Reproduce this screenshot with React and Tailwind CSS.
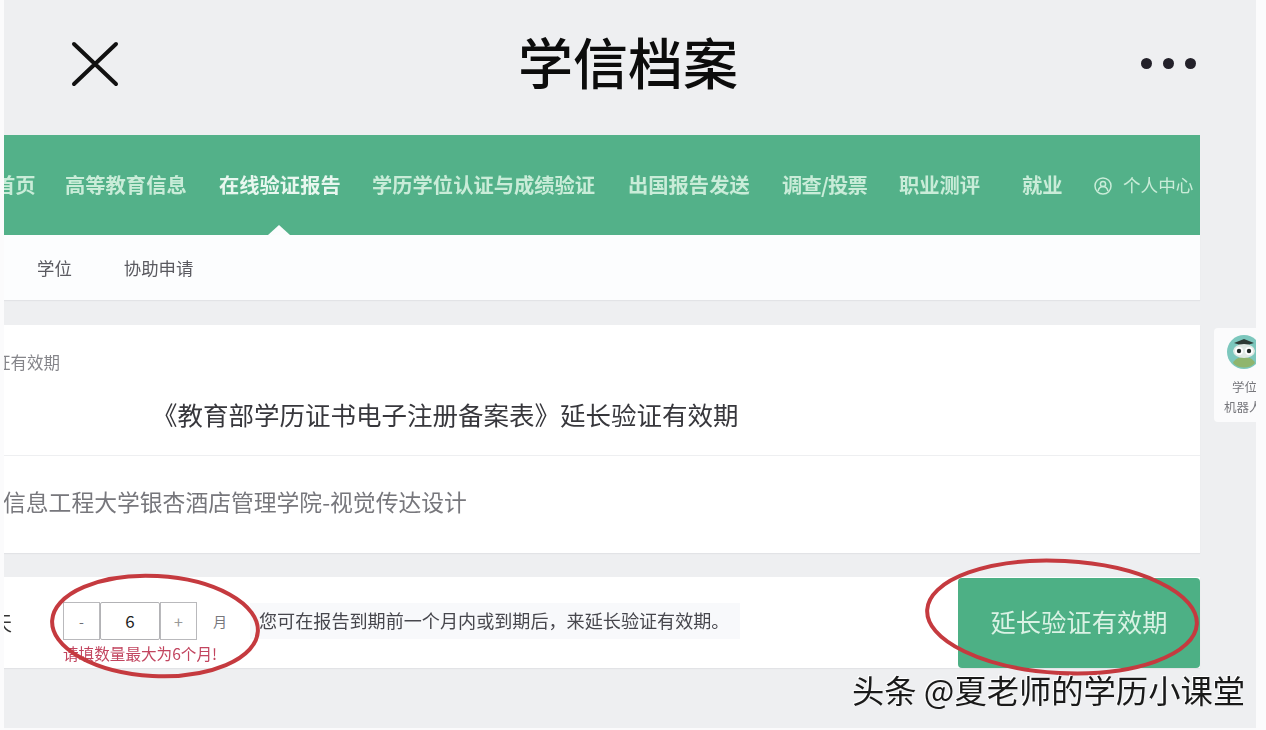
const cjk = "font-['Noto_Sans_CJK_SC','Noto_Sans',sans-serif]";

const navItems = [
  { label: "高等教育信息", className: "w-[122px]" },
  { label: "在线验证报告", className: "w-[121px] text-[#e8f7ef]" },
  { label: "学历学位认证与成绩验证", className: "w-[224px]" },
  { label: "出国报告发送", className: "w-[122px]" },
  { label: "调查/投票", className: "w-[85px] tracking-[-0.8px]" },
  { label: "职业测评", className: "w-[81px]" },
];

function Owl() {
  return (
    <svg width="36" height="36" viewBox="0 0 36 36" className="block">
      <circle cx="18" cy="18" r="17" fill="#7cc7bd" />
      <path d="M7 29c3-8 19-8 22 0-5 6-17 6-22 0z" fill="#8fb56d" />
      <path d="M8 9l10-4 10 4-10 3z" fill="#2d3a35" />
      <ellipse cx="18" cy="17" rx="11" ry="7" fill="#dfe9e4" />
      <circle cx="13" cy="17" r="4" fill="#fff" />
      <circle cx="23" cy="17" r="4" fill="#fff" />
      <circle cx="13" cy="17" r="2.2" fill="#1f2a26" />
      <circle cx="23" cy="17" r="2.2" fill="#1f2a26" />
    </svg>
  );
}

export default function App() {
  return (
    <div className={`relative flex h-[730px] w-[1266px] overflow-hidden bg-[#fbfbfc] ${cjk}`}>
      <div className="w-[4px] shrink-0" />

      <div className="h-[728px] w-[1252px] shrink-0 overflow-hidden bg-[#eeeff1]">
        {/* wechat title bar */}
        <header className="relative flex h-[135px] items-center justify-between pb-[8px] pl-[67px] pr-[60px]">
          <svg width="48" height="46" viewBox="0 0 48 46" fill="none" stroke="#111" strokeWidth="4" strokeLinecap="round">
            <path d="M3 3l42 40M45 3L3 43" />
          </svg>
          <h1 className="absolute left-[514px] top-[24px] text-[55px] leading-[72px] font-medium text-[#0c0c0c]">学信档案</h1>
          <div className="flex gap-[11px]">
            <span className="h-[11px] w-[11px] rounded-full bg-[#23212a]" />
            <span className="h-[11px] w-[11px] rounded-full bg-[#23212a]" />
            <span className="h-[11px] w-[11px] rounded-full bg-[#23212a]" />
          </div>
        </header>

        <div className="w-[1196px]">
          {/* green nav */}
          <nav className="relative flex h-[100px] items-center overflow-hidden bg-[#53b189] pb-[2px] text-[20.3px] font-bold text-[#c9ecd8] blur-[0.5px]">
            <span className="ml-[-9px] w-[40px] shrink-0 whitespace-nowrap">首页</span>
            <div className="ml-[30px] flex gap-[32px]">
              {navItems.map((item) => (
                <span key={item.label} className={`shrink-0 whitespace-nowrap ${item.className}`}>
                  {item.label}
                </span>
              ))}
            </div>
            <span className="ml-[42px] w-[40px] shrink-0 whitespace-nowrap">就业</span>
            <svg width="18" height="18" viewBox="0 0 18 18" fill="none" stroke="#c9ecd8" strokeWidth="1.5" className="ml-[32px] mt-[3px] shrink-0">
              <circle cx="9" cy="9" r="8" />
              <circle cx="9" cy="7" r="2.6" />
              <path d="M4 14c1-3.5 3-4.5 5-4.5s4 1 5 4.5" />
            </svg>
            <span className="ml-[11px] mt-[2px] shrink-0 text-[17.6px] font-normal">个人中心</span>
            <span className="absolute bottom-0 left-[264px] h-0 w-0 border-x-[11px] border-b-[10px] border-x-transparent border-b-[#fbfcfd]" />
          </nav>

          {/* sub nav */}
          <div className="flex h-[65px] items-center gap-[52px] bg-[#fcfdfe] pl-[33px] pt-[2px] text-[17.4px] text-[#5a5a60] shadow-[0_1px_1px_#e2e3e6] blur-[0.3px]">
            <span>学位</span>
            <span>协助申请</span>
          </div>

          {/* report card */}
          <section className="mt-[25px] overflow-hidden bg-white shadow-[0_1px_1px_#e2e3e6]">
            <div className="h-[131px] border-b border-[#eeeff1] pt-[25px] text-[#4a4a50]">
              <div className="ml-[-10px] text-[16.5px] leading-[24px] whitespace-nowrap text-[#85858a] blur-[0.3px]">证有效期</div>
              <div className="ml-[148px] mt-[21px] text-[25.5px] leading-[38px] whitespace-nowrap text-[#37373c] blur-[0.3px]">
                《教育部学历证书电子注册备案表》延长验证有效期
              </div>
            </div>
            <div className="ml-[-1px] flex h-[97px] items-center pb-[5px] text-[22.8px] whitespace-nowrap text-[#77777c] blur-[0.3px]">
              信息工程大学银杏酒店管理学院-视觉传达设计
            </div>
          </section>

          {/* extend row */}
          <section className="relative mt-[24px] flex h-[91px] items-center bg-white shadow-[0_1px_1px_#e2e3e6]">
            <span className="ml-[-12px] w-[20px] shrink-0 text-[20px] text-[#333] blur-[0.3px]">天</span>
            <div className="relative ml-[51px] mb-[3px] flex h-[38px] shrink-0 text-[#6e6e73]">
              <span className="flex w-[37px] items-center justify-center border border-[#b9b9bc] text-[14px]">-</span>
              <span className="flex w-[60px] items-center justify-center rounded-[2px] border border-[#b2b2b5] text-[17px] text-[#222]">6</span>
              <span className="flex w-[37px] items-center justify-center border border-[#b9b9bc] text-[16px] text-[#999]">+</span>
              <span className="absolute left-[150px] top-[9px] text-[14px] text-[#77777c]">月</span>
              <span className="absolute left-0 top-[41px] whitespace-nowrap text-[15.6px] leading-[20px] text-[#c2455f] blur-[0.4px]">请填数量最大为6个月!</span>
            </div>
            <div className="ml-[53px] mb-[3px] flex h-[36px] w-[490px] shrink-0 items-center bg-[#f8f9fb] pl-[9px] text-[18.1px] whitespace-nowrap text-[#47474d] blur-[0.3px]">
              您可在报告到期前一个月内或到期后，来延长验证有效期。
            </div>
            <button className="absolute bottom-0 right-0 top-[1px] flex w-[242px] items-center justify-center rounded-[4px] bg-[#4db085] pb-[2px] text-[25.3px] text-[#d9f2e4] blur-[0.3px]">
              延长验证有效期
            </button>

            {/* red marker circles */}
            <svg width="220" height="112" viewBox="0 0 220 112" fill="none" className="absolute left-[41px] top-[-7px] blur-[0.4px]">
              <ellipse cx="110" cy="56" rx="103" ry="50" stroke="#c53a3f" strokeWidth="4" transform="rotate(3 110 56)" />
            </svg>
            <svg width="284" height="124" viewBox="0 0 284 124" fill="none" className="absolute left-[916px] top-[-22px] blur-[0.4px]">
              <ellipse cx="142" cy="62" rx="135" ry="56" stroke="#c53a3f" strokeWidth="4" transform="rotate(3 142 62)" />
            </svg>
          </section>
        </div>
      </div>

      {/* floating helper */}
      <aside className="absolute left-[1214px] top-[328px] flex h-[94px] w-[42px] flex-col overflow-hidden rounded-l-[4px] bg-[#fbfbfc] text-[12.5px] leading-[20px] whitespace-nowrap text-[#77777c] blur-[0.3px]">
        <div className="ml-[12px] mt-[6px]">
          <Owl />
        </div>
        <span className="ml-[18px] mt-[7px]">学位</span>
        <span className="ml-[10px]">机器人</span>
      </aside>

      {/* watermark */}
      <div className="absolute left-[852px] top-[667px] whitespace-nowrap text-[32.3px] leading-[44px] text-[#1a1a1a] blur-[0.3px] [text-shadow:-1px_-1px_0_#fff,-1px_0_0_#fff]">
        头条 @夏老师的学历小课堂
      </div>
    </div>
  );
}
